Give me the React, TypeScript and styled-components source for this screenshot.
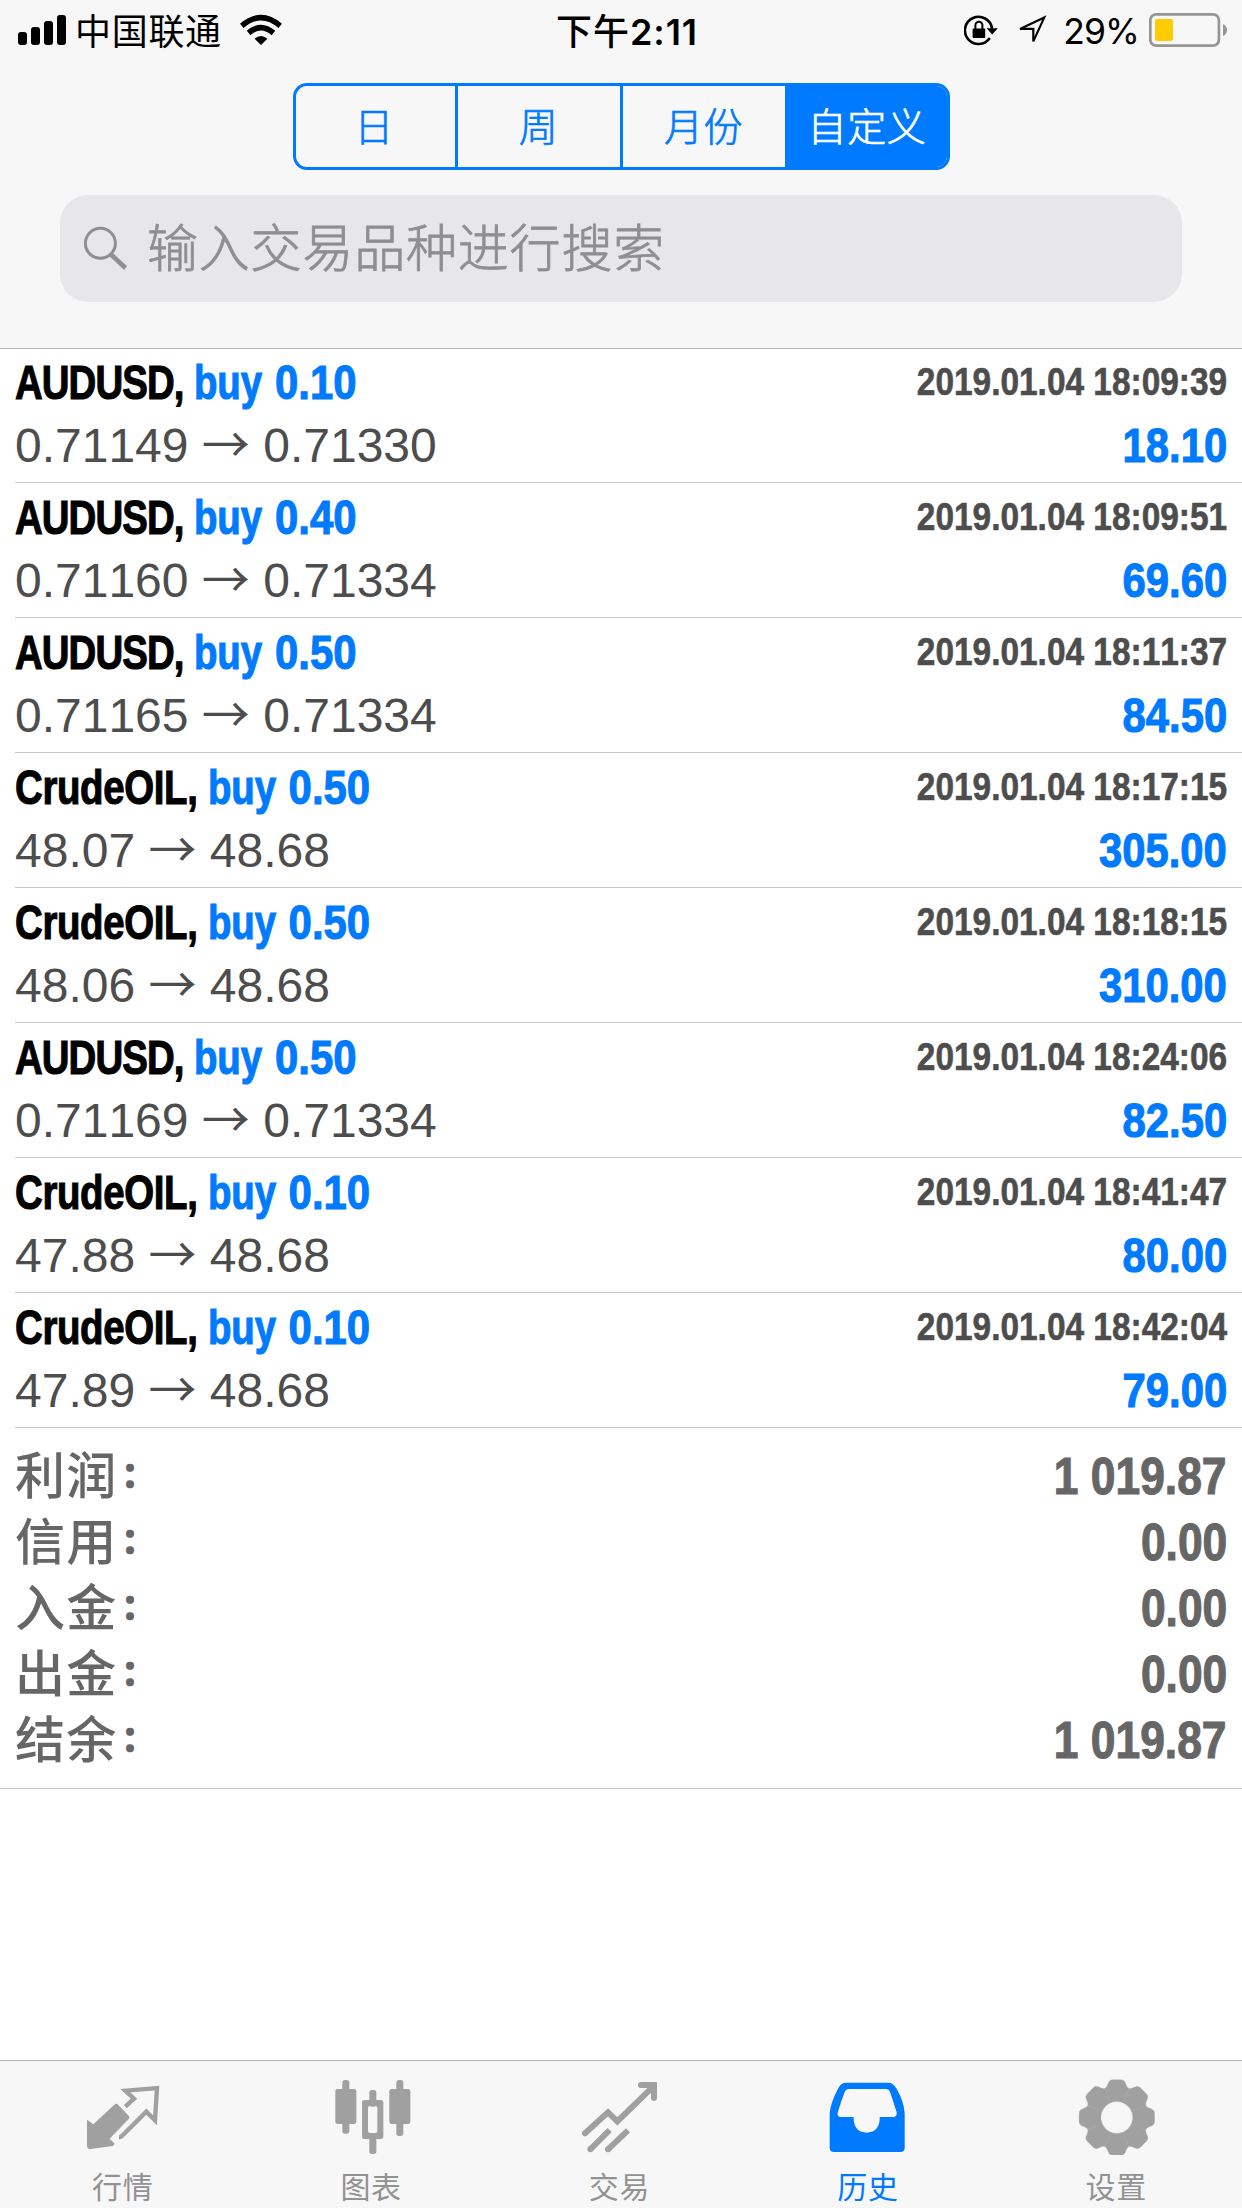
import React from 'react';
import styled, { createGlobalStyle } from 'styled-components';

const BLUE = '#007aff';
const UI = `Inter, "Noto Sans CJK SC", sans-serif`;
const HELV = `"Liberation Sans", "Noto Sans CJK SC", sans-serif`;

const Global = createGlobalStyle`
  *, *::before, *::after { box-sizing: border-box; }
  body { margin: 0; background: #fff; }
`;

const Screen = styled.div`
  display: flex;
  flex-direction: column;
  width: 1242px;
  height: 2208px;
  overflow: hidden;
  background: #fff;
  font-family: ${HELV};
  font-kerning: none;
`;

/* ---------- header ---------- */

const Header = styled.header`
  flex: none;
  display: flex;
  flex-direction: column;
  height: 349px;
  background: #f7f7f7;
  border-bottom: 1px solid #b2b2b2;
`;

const StatusBar = styled.div`
  display: grid;
  grid-template-columns: 1fr auto 1fr;
  height: 62px;
  padding: 0 15px 0 18px;
  font-family: ${UI};
  font-size: 35.5px;
  line-height: 64px;
  color: #000;
  white-space: nowrap;

  svg {
    display: block;
    flex: none;
  }
`;

const StatusLeft = styled.div`
  display: flex;
`;

const Carrier = styled.span`
  margin: 0 18px 0 9px;
  font-size: 36px;
  letter-spacing: 0.7px;
`;

const Clock = styled.div`
  padding-left: 9px;
  font-size: 36px;
  font-weight: 600;
  letter-spacing: 0.9px;
`;

const Meridiem = styled.span`
  font-weight: 500;
`;

const StatusRight = styled.div`
  display: flex;
  justify-content: flex-end;
`;

const Percent = styled.span`
  margin: 0 10px 0 16px;
  letter-spacing: -0.9px;
`;

const Segments = styled.div`
  display: grid;
  grid-template-columns: 159px 165px 165px 1fr;
  align-self: center;
  width: 657px;
  height: 87px;
  margin-top: 21px;
  overflow: hidden;
  border: 3px solid ${BLUE};
  border-radius: 14px;
`;

const Segment = styled.button<{ $active?: boolean }>`
  padding: 0 0 4px;
  border: 0;
  background: ${p => (p.$active ? BLUE : 'transparent')};
  color: ${p => (p.$active ? '#fff' : BLUE)};
  font: 300 39px/77px "Noto Sans CJK SC", sans-serif;
  letter-spacing: 0.6px;
  -webkit-text-stroke: 0.7px currentColor;

  &:first-child {
    padding-right: 2px;
  }

  & + & {
    border-left: 3px solid ${BLUE};
  }
`;

const SearchField = styled.div`
  display: flex;
  height: 107px;
  margin: 25px 60px 0;
  padding-left: 23px;
  border-radius: 28px;
  background: #e7e7e9;
  color: #8e8e93;
  font: 300 51px/100px "Noto Sans CJK SC", sans-serif;
  letter-spacing: 0.8px;
  -webkit-text-stroke: 0.8px currentColor;

  svg {
    flex: none;
    margin: 31px 19px 0 0;
  }
`;

/* ---------- deals ---------- */

const DealList = styled.ul`
  flex: none;
  margin: -1px 0 0;
  padding: 0;
  list-style: none;
`;

const Deal = styled.li`
  height: 135px;
  margin-left: 15px;
  padding: 5px 15px 0 0;
  border-bottom: 1px solid #c8c7cc;
`;

const Line = styled.div<{ $height: number }>`
  display: flex;
  justify-content: space-between;
  height: ${p => p.$height}px;
  font-size: 48px;
  line-height: ${p => p.$height}px;
  white-space: nowrap;
`;

/* Bold Helvetica squeezed to its condensed cut. */
const Condensed = styled.span<{ $scale: number; $from?: 'left' | 'right' }>`
  display: inline-block;
  font-weight: 700;
  transform: scaleX(${p => p.$scale});
  transform-origin: ${p => p.$from ?? 'left'} center;
  -webkit-text-stroke: 1.1px currentColor;
`;

const Ticker = styled.span<{ $tracking: number }>`
  color: #000;
  letter-spacing: ${p => p.$tracking}em;
`;

const Side = styled.span`
  margin-left: 13px;
  color: ${BLUE};
`;

const Volume = styled(Condensed)`
  margin-left: 16px;
  color: ${BLUE};
`;

const ClosedAt = styled(Condensed)`
  height: 57px;
  color: #4d4d4d;
  font-size: 39px;
  line-height: 57px;
  -webkit-text-stroke-width: 0.6px;
`;

const Prices = styled.span`
  color: #4d4d4d;
`;

const Arrow = styled.span`
  font-family: "Noto Sans CJK SC", sans-serif;
  line-height: 0;
`;

const Profit = styled(Condensed)`
  color: ${BLUE};
`;

/* ---------- totals ---------- */

const Totals = styled.section`
  flex: none;
  height: 361px;
  padding: 16px 15px 0;
  border-bottom: 1px solid #c8c7cc;
  color: #666;
`;

const TotalRow = styled.div`
  display: flex;
  justify-content: space-between;
  height: 66px;
  font-size: 51px;
  line-height: 66px;
`;

const TotalName = styled.span`
  font-size: 50px;
  font-weight: 500;
  letter-spacing: 1.3px;
`;

const Colon = styled.span`
  display: inline-block;
  height: 40px;
  margin-left: 4px;
  font: 700 34px/40px "Noto Sans CJK SC", sans-serif;
  vertical-align: 7px;
  -webkit-text-stroke: 1.5px currentColor;
`;

/* ---------- tab bar ---------- */

const TabBar = styled.nav`
  display: grid;
  grid-template-columns: repeat(5, 1fr);
  height: 148px;
  margin-top: auto;
  border-top: 1px solid #b2b2b2;
  background: #f7f7f7;
`;

const Tab = styled.a<{ $active?: boolean }>`
  display: flex;
  flex-direction: column;
  align-items: center;
  padding-top: 14px;
  color: ${p => (p.$active ? BLUE : '#a0a0a0')};
`;

const TabLabel = styled.span<{ $active?: boolean }>`
  margin: 13px 3px 0 0;
  color: ${p => (p.$active ? BLUE : '#929292')};
  font-size: 30px;
  line-height: 40px;
  letter-spacing: 0.7px;
`;

/* ---------- icons ---------- */

const Signal = () => (
  <svg width="48" height="60" viewBox="0 0 48 60">
    <rect x="0" y="32" width="9" height="13" rx="3" />
    <rect x="13" y="27" width="9" height="18" rx="3" />
    <rect x="26" y="21" width="9" height="24" rx="3" />
    <rect x="39" y="15" width="9" height="30" rx="3" />
  </svg>
);

const Wifi = () => (
  <svg width="42" height="60" viewBox="0 0 42 60" fill="none" stroke="#000">
    <path d="M1.8 25.8Q21 9.4 40.2 25.8" strokeWidth="5.6" />
    <path d="M8.6 33Q21 22.4 33.4 33" strokeWidth="5.6" />
    <path d="M14.6 38.8Q21 33.4 27.4 38.8L21 45Z" fill="#000" stroke="none" />
  </svg>
);

const RotationLock = () => (
  <svg width="34" height="60" viewBox="965 0 34 60">
    <path d="M993 28.5A13.6 13.6 0 1 0 990.8 38" fill="none" stroke="#000" strokeWidth="2.6" />
    <path d="M987.6 28.2H998.8L993.2 34.6Z" />
    <rect x="973.6" y="28.6" width="12.6" height="9.4" rx="1" />
    <path d="M976.4 29V25.2a3.5 3.5 0 0 1 7 0V29" fill="none" stroke="#000" strokeWidth="2" />
  </svg>
);

const LocationSvg = styled.svg`
  margin-left: 18px;
`;

const Location = () => (
  <LocationSvg width="31" height="60" viewBox="1017 0 31 60">
    <path d="M1045.2 17.6L1021 28.9H1034.3V41.4Z" fill="none" stroke="#000" strokeWidth="2.2" />
  </LocationSvg>
);

const Battery = () => (
  <svg width="78" height="60" viewBox="0 0 78 60">
    <rect x="1.3" y="14.3" width="68.6" height="31.4" rx="6" fill="none" stroke="#959595" strokeWidth="2.7" />
    <rect x="6" y="19" width="18" height="22" rx="2" fill="#fc0" />
    <path d="M74 24Q78 26 78 30T74 36Z" fill="#959595" />
  </svg>
);

const Magnifier = () => (
  <svg width="45" height="44" viewBox="83 226 45 44" fill="none" stroke="#8e8e93">
    <circle cx="100.4" cy="243.3" r="15" strokeWidth="3" />
    <path d="M111 254.5L125.5 268" strokeWidth="4.6" />
  </svg>
);

const TabSvg = ({ x, children }: { x: number; children: React.ReactNode }) => (
  <svg width="80" height="80" viewBox={`${x} 75 240 240`} fill="currentColor">
    {children}
  </svg>
);

const QuotesIcon = () => (
  <TabSvg x={252}>
    <path d="M261 209L280 223L343 164Q349 159 354 164L386 197Q391 202 386 207L329 266L343 280Q344 286 338 288L272 297Q261 297 261 287Z" />
    <path
      d="M376 170L402 146L376 122L471 114L465 211L439 185L365 259Q362 262 357 262"
      fill="none"
      stroke="currentColor"
      strokeWidth="13"
    />
  </TabSvg>
);

const ChartIcon = () => (
  <TabSvg x={998}>
    <rect x="1026" y="90" width="21" height="161" rx="8" />
    <rect x="1005" y="117" width="63" height="105" rx="7" />
    <rect x="1188" y="90" width="21" height="168" rx="8" />
    <rect x="1167" y="117" width="63" height="105" rx="7" />
    <rect x="1107" y="120" width="21" height="50" rx="8" />
    <rect x="1107" y="250" width="21" height="62" rx="8" />
    <path
      fillRule="evenodd"
      d="M1092 150h50q7 0 7 7v103q0 7-7 7h-50q-7 0-7-7V157q0-7 7-7ZM1109 168q-6 0-6 6v69q0 6 6 6h16q6 0 6-6v-69q0-6-6-6Z"
    />
  </TabSvg>
);

const TradeIcon = () => (
  <TabSvg x={123}>
    <g fill="none" stroke="currentColor" strokeWidth="18">
      <path d="M135 250L204 187L232 214L340 109" strokeLinecap="round" />
      <path d="M303 105H342V144" strokeLinecap="round" />
      <path d="M151 298L209 240M204 298L264 241" />
    </g>
    <circle cx="151" cy="298" r="9" />
    <circle cx="204" cy="298" r="9" />
  </TabSvg>
);

const HistoryIcon = () => (
  <TabSvg x={868}>
    <path
      fillRule="evenodd"
      d="M870 190Q873 158 893 120Q903 98 917 98H1047Q1060 98 1070 115Q1093 155 1095 190V293Q1095 306 1082 306H883Q870 306 870 293ZM928 117Q919 117 915 126Q904 154 894 188Q892 201 904 201H942V208C943 234 958 248 981 248S1019 234 1020 208V201H1060Q1073 201 1071 187L1051 125Q1048 117 1039 117Z"
    />
  </TabSvg>
);

const SettingsIcon = () => (
  <TabSvg x={233}>
    <g transform="translate(349.5 202.5)">
      {[0, 45, 90, 135, 180, 225, 270, 315].map(a => (
        <path
          key={a}
          transform={`rotate(${a})`}
          d="M-18.4 -44.3L-36 -87Q-30 -90 -25 -105Q-22 -113 -13 -113H13Q22 -113 25 -105Q30 -90 36 -87L18.4 -44.3A48 48 0 0 0 -18.4 -44.3Z"
          stroke="currentColor"
          strokeWidth="1"
        />
      ))}
    </g>
  </TabSvg>
);

/* ---------- data ---------- */

const deals = [
  { symbol: 'AUDUSD', volume: '0.10', open: '0.71149', close: '0.71330', time: '18:09:39', profit: '18.10' },
  { symbol: 'AUDUSD', volume: '0.40', open: '0.71160', close: '0.71334', time: '18:09:51', profit: '69.60' },
  { symbol: 'AUDUSD', volume: '0.50', open: '0.71165', close: '0.71334', time: '18:11:37', profit: '84.50' },
  { symbol: 'CrudeOIL', volume: '0.50', open: '48.07', close: '48.68', time: '18:17:15', profit: '305.00' },
  { symbol: 'CrudeOIL', volume: '0.50', open: '48.06', close: '48.68', time: '18:18:15', profit: '310.00' },
  { symbol: 'AUDUSD', volume: '0.50', open: '0.71169', close: '0.71334', time: '18:24:06', profit: '82.50' },
  { symbol: 'CrudeOIL', volume: '0.10', open: '47.88', close: '48.68', time: '18:41:47', profit: '80.00' },
  { symbol: 'CrudeOIL', volume: '0.10', open: '47.89', close: '48.68', time: '18:42:04', profit: '79.00' },
];

const totals = [
  ['利润', '1 019.87'],
  ['信用', '0.00'],
  ['入金', '0.00'],
  ['出金', '0.00'],
  ['结余', '1 019.87'],
];

const periods = ['日', '周', '月份', '自定义'];

const tabs = [
  { label: '行情', Icon: QuotesIcon },
  { label: '图表', Icon: ChartIcon },
  { label: '交易', Icon: TradeIcon },
  { label: '历史', Icon: HistoryIcon, active: true },
  { label: '设置', Icon: SettingsIcon },
];

export default function App() {
  return (
    <Screen>
      <Global />
      <Header>
        <StatusBar>
          <StatusLeft>
            <Signal />
            <Carrier>中国联通</Carrier>
            <Wifi />
          </StatusLeft>
          <Clock>
            <Meridiem>下午</Meridiem>2:11
          </Clock>
          <StatusRight>
            <RotationLock />
            <Location />
            <Percent>29%</Percent>
            <Battery />
          </StatusRight>
        </StatusBar>
        <Segments>
          {periods.map(p => (
            <Segment key={p} $active={p === '自定义'}>{p}</Segment>
          ))}
        </Segments>
        <SearchField>
          <Magnifier />
          输入交易品种进行搜索
        </SearchField>
      </Header>

      <DealList>
        {deals.map(d => (
          <Deal key={d.time}>
            <Line $height={60}>
              <Condensed $scale={0.8}>
                <Ticker $tracking={d.symbol === 'AUDUSD' ? -0.024 : -0.009}>{d.symbol},</Ticker>
                <Side>buy</Side>
                <Volume $scale={1.09}>{d.volume}</Volume>
              </Condensed>
              <ClosedAt $scale={0.857} $from="right">2019.01.04 {d.time}</ClosedAt>
            </Line>
            <Line $height={65}>
              <Prices>
                {d.open} <Arrow>→</Arrow> {d.close}
              </Prices>
              <Profit $scale={0.87} $from="right">{d.profit}</Profit>
            </Line>
          </Deal>
        ))}
      </DealList>

      <Totals>
        {totals.map(([name, value]) => (
          <TotalRow key={name}>
            <TotalName>{name}<Colon>：</Colon></TotalName>
            <Condensed $scale={0.87} $from="right">{value}</Condensed>
          </TotalRow>
        ))}
      </Totals>

      <TabBar>
        {tabs.map(({ label, Icon, active }) => (
          <Tab key={label} $active={active}>
            <Icon />
            <TabLabel $active={active}>{label}</TabLabel>
          </Tab>
        ))}
      </TabBar>
    </Screen>
  );
}
